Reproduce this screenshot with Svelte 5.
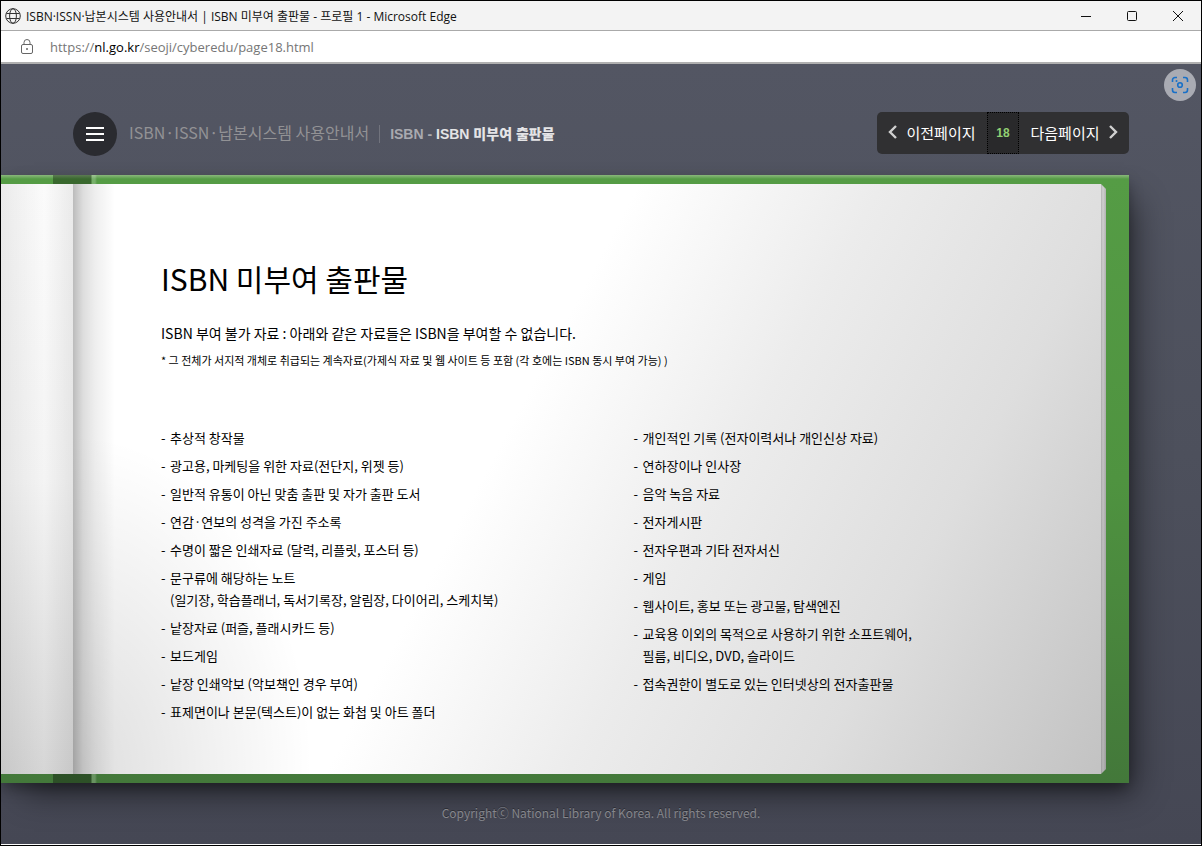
<script>
  // Left and right column of the page, an item can have more than one line
  const leftItems = [
    ['추상적 창작물'],
    ['광고용, 마케팅을 위한 자료(전단지, 위젯 등)'],
    ['일반적 유통이 아닌 맞춤 출판 및 자가 출판 도서'],
    ['연감·연보의 성격을 가진 주소록'],
    ['수명이 짧은 인쇄자료 (달력, 리플릿, 포스터 등)'],
    ['문구류에 해당하는 노트', '(일기장, 학습플래너, 독서기록장, 알림장, 다이어리, 스케치북)'],
    ['낱장자료 (퍼즐, 플래시카드 등)'],
    ['보드게임'],
    ['낱장 인쇄악보 (악보책인 경우 부여)'],
    ['표제면이나 본문(텍스트)이 없는 화첩 및 아트 폴더'],
  ];

  const rightItems = [
    ['개인적인 기록 (전자이력서나 개인신상 자료)'],
    ['연하장이나 인사장'],
    ['음악 녹음 자료'],
    ['전자게시판'],
    ['전자우편과 기타 전자서신'],
    ['게임'],
    ['웹사이트, 홍보 또는 광고물, 탐색엔진'],
    ['교육용 이외의 목적으로 사용하기 위한 소프트웨어,', '필름, 비디오, DVD, 슬라이드'],
    ['접속권한이 별도로 있는 인터넷상의 전자출판물'],
  ];

  let page = $state(18);
</script>

<div class="window">
  <div class="titlebar">
    <svg class="globe" viewBox="0 0 16 16" width="16" height="16" aria-hidden="true">
      <circle cx="8" cy="8" r="7.3" />
      <ellipse cx="8" cy="8" rx="3.4" ry="7.3" />
      <path d="M1.4 5.5h13.2M1.4 10.5h13.2" />
    </svg>
    <span class="caption">ISBN·ISSN·납본시스템 사용안내서 | ISBN 미부여 출판물 - 프로필 1 - Microsoft Edge</span>
    <div class="controls">
      <button aria-label="최소화">
        <svg viewBox="0 0 12 12" width="12" height="12"><path d="M1 6.5h10" /></svg>
      </button>
      <button aria-label="최대화">
        <svg viewBox="0 0 12 12" width="12" height="12"><rect x="1.5" y="1.5" width="9" height="9" rx="1" /></svg>
      </button>
      <button aria-label="닫기">
        <svg viewBox="0 0 12 12" width="12" height="12"><path d="M1 1l10 10M11 1L1 11" /></svg>
      </button>
    </div>
  </div>

  <div class="address">
    <svg viewBox="0 0 14 16" width="14" height="16" aria-hidden="true">
      <rect x="1.5" y="5.5" width="11" height="9" rx="1.5" />
      <path d="M4 5.5V3.5a3 3 0 0 1 6 0v2" />
      <circle class="dot" cx="7" cy="10" r="1" />
    </svg>
    <span class="url">https://<b>nl.go.kr</b>/seoji/cyberedu/page18.html</span>
  </div>

  <div class="viewport">
    <button class="lens" aria-label="이미지 검색">
      <svg viewBox="0 0 18 18" width="18" height="18">
        <path d="M1.5 6V4a2.5 2.5 0 0 1 2.5-2.5h2M12 1.5h2A2.5 2.5 0 0 1 16.5 4v2M16.5 12v2a2.5 2.5 0 0 1-2.5 2.5h-2M6 16.5H4A2.5 2.5 0 0 1 1.5 14v-2" />
        <circle cx="9" cy="9" r="2.3" />
        <circle class="dot" cx="5.5" cy="5" r="1" />
      </svg>
    </button>

    <header>
      <button class="menu" aria-label="메뉴">
        <svg viewBox="0 0 18 14" width="18" height="14"><path d="M0 1h18M0 7h18M0 13h18" /></svg>
      </button>
      <a class="brand" href="#top">ISBN·ISSN·납본시스템 사용안내서</a>
      <div class="crumb">ISBN - <strong>ISBN 미부여 출판물</strong></div>
      <nav>
        <button onclick={() => page--}>
          <svg viewBox="0 0 9 14" width="9" height="14"><path d="M8 1L2 7l6 6" /></svg>
          이전페이지
        </button>
        <a class="current" href="#page">{page}</a>
        <button onclick={() => page++}>
          다음페이지
          <svg viewBox="0 0 9 14" width="9" height="14"><path d="M1 1l6 6-6 6" /></svg>
        </button>
      </nav>
    </header>

    <div class="book">
      <div class="left-page"></div>
      <main>
        <h1>ISBN 미부여 출판물</h1>
        <p class="lead">ISBN 부여 불가 자료 : 아래와 같은 자료들은 ISBN을 부여할 수 없습니다.</p>
        <p class="note">* 그 전체가 서지적 개체로 취급되는 계속자료(가제식 자료 및 웹 사이트 등 포함 (각 호에는 ISBN 동시 부여 가능) )</p>
        <div class="columns">
          {#each [leftItems, rightItems] as items}
            <ul>
              {#each items as lines}
                <li>
                  {#each lines as line}
                    <div>{line}</div>
                  {/each}
                </li>
              {/each}
            </ul>
          {/each}
        </div>
      </main>
    </div>

    <footer>Copyrightⓒ National Library of Korea. All rights reserved.</footer>
  </div>
</div>

<style>
  :global(body) {
    margin: 0;
  }

  .window {
    box-sizing: border-box;
    min-height: 100vh;
    display: flex;
    flex-direction: column;
    border: 1px solid #000;
    background: #fff;
    font-family: "Noto Sans CJK KR", sans-serif;
  }

  button {
    border: none;
    padding: 0;
    background: none;
    font-family: inherit;
    color: inherit;
    display: flex;
    align-items: center;
    justify-content: center;
  }

  a {
    color: inherit;
    text-decoration: none;
  }

  svg {
    fill: none;
    stroke: currentColor;
    flex: none;
  }

  .dot {
    fill: currentColor;
    stroke: none;
  }

  .titlebar {
    display: flex;
    align-items: center;
    height: 29px;
    padding-left: 4px;
    gap: 5px;
    background: #f3f3f3;
    border-bottom: 1px solid #aaa;
    color: #111;
  }

  .globe {
    color: #333;
  }

  .caption {
    font-family: "Open Sans", "Noto Sans CJK KR", sans-serif;
    font-size: 12px;
    white-space: nowrap;
  }

  .controls {
    display: flex;
    margin-left: auto;
  }

  .controls button {
    width: 46px;
    height: 29px;
  }

  .address {
    display: flex;
    align-items: center;
    height: 31px;
    padding-left: 19px;
    gap: 16px;
    border-bottom: 2px solid #b0b0b0;
    color: #666;
  }

  .url {
    font-family: "Open Sans", sans-serif;
    font-size: 13px;
    color: #767676;
  }

  .url b {
    font-weight: 400;
    color: #000;
  }

  .viewport {
    position: relative;
    flex: 1;
    display: flex;
    flex-direction: column;
    background: linear-gradient(#535663, #4d505c 50%, #454754);
    border-bottom: 1px solid #fff;
    overflow: hidden;
  }

  .lens {
    position: absolute;
    top: 5px;
    right: 5px;
    width: 32px;
    height: 32px;
    border-radius: 50%;
    background: #a9abb3;
    color: #1870c8;
  }

  .lens svg {
    stroke-width: 1.6;
  }

  header {
    display: flex;
    align-items: center;
    padding: 48px 72px 19px;
  }

  .menu {
    width: 44px;
    height: 44px;
    border-radius: 50%;
    background: #2a2b30;
    color: #fff;
  }

  .menu svg {
    stroke-width: 2;
  }

  .brand {
    margin-left: 12px;
    padding-bottom: 4px;
    font-size: 16px;
    line-height: 20px;
    color: #929295;
    white-space: nowrap;
  }

  .crumb {
    margin-left: 10px;
    padding-left: 10px;
    border-left: 1px solid #71737d;
    font-family: "Liberation Sans", "Noto Sans CJK KR", sans-serif;
    font-size: 14px;
    line-height: 18px;
    font-weight: 700;
    color: #a9aab0;
    white-space: nowrap;
  }

  .crumb strong {
    color: #e4e4e6;
  }

  nav {
    display: flex;
    height: 42px;
    margin-left: auto;
    align-self: flex-start;
    border-radius: 5px;
    background: #303032;
    color: #fff;
  }

  nav button {
    width: 110px;
    gap: 9px;
    padding-bottom: 2px;
    font-size: 15px;
    white-space: nowrap;
  }

  nav svg {
    color: #d0d0d0;
    stroke-width: 2.4;
  }

  .current {
    width: 30px;
    border: 1px dotted #000;
    background: #29292b;
    font: bold 12px/40px "Liberation Sans", sans-serif;
    text-align: center;
    color: #92cf73;
  }

  .book {
    display: flex;
    margin-right: 72px;
    padding: 9px 23px 9px 0;
    background:
      linear-gradient(90deg, transparent 52px, #0005 52px, #0005 90px, #fff3 91px, #fff3 94px, transparent 96px),
      linear-gradient(#8ab87c, #559c45 4px, #4f9340 50%, #43783a);
    box-shadow: 14px 18px 32px -8px #0007, 0 6px 14px -2px #0006;
  }

  .left-page {
    width: 72px;
    background:
      linear-gradient(90deg, #0001, #0000 60%, #0001),
      linear-gradient(#fbfbfb, #f4f4f4 50%, #d6d6d6);
  }

  main {
    flex: 1;
    padding: 74px 0 45px 88px;
    color: #000;
    background:
      linear-gradient(90deg, transparent calc(100% - 5px), #0003 calc(100% - 5px), #0001 calc(100% - 3px), #0003),
      linear-gradient(90deg, #0004, #0002 10px, #0001 22px, #0000 42px),
      radial-gradient(ellipse 240px 340px at 0 100%, #0002, #0000),
      linear-gradient(118deg, #fff 42%, #ececec 60%, #dedede 78%, #c2c2c2);
    clip-path: polygon(0 0, calc(100% - 5px) 0, 100% 5px, 100% calc(100% - 5px), calc(100% - 5px) 100%, 0 100%);
  }

  h1 {
    margin: 0;
    font-size: 30px;
    line-height: 40px;
    font-weight: 400;
  }

  p {
    margin: 0;
  }

  .lead {
    margin-top: 23px;
    font-size: 14px;
    line-height: 24px;
  }

  .note {
    margin-top: 5px;
    font-size: 11px;
    line-height: 20px;
  }

  .columns {
    display: grid;
    grid-template-columns: 1fr 1fr;
    margin-top: 57px;
  }

  ul {
    margin: 0;
    padding: 0;
    list-style: none;
    font-size: 13px;
    line-height: 22px;
  }

  li {
    position: relative;
    margin-bottom: 6px;
    padding-left: 9px;
  }

  li::before {
    content: "-";
    position: absolute;
    left: 0;
  }

  footer {
    padding: 20px 0;
    font-size: 12px;
    line-height: 20px;
    text-align: center;
    color: #85868c;
    text-shadow: 0 -1px #2c2d34;
  }
</style>
